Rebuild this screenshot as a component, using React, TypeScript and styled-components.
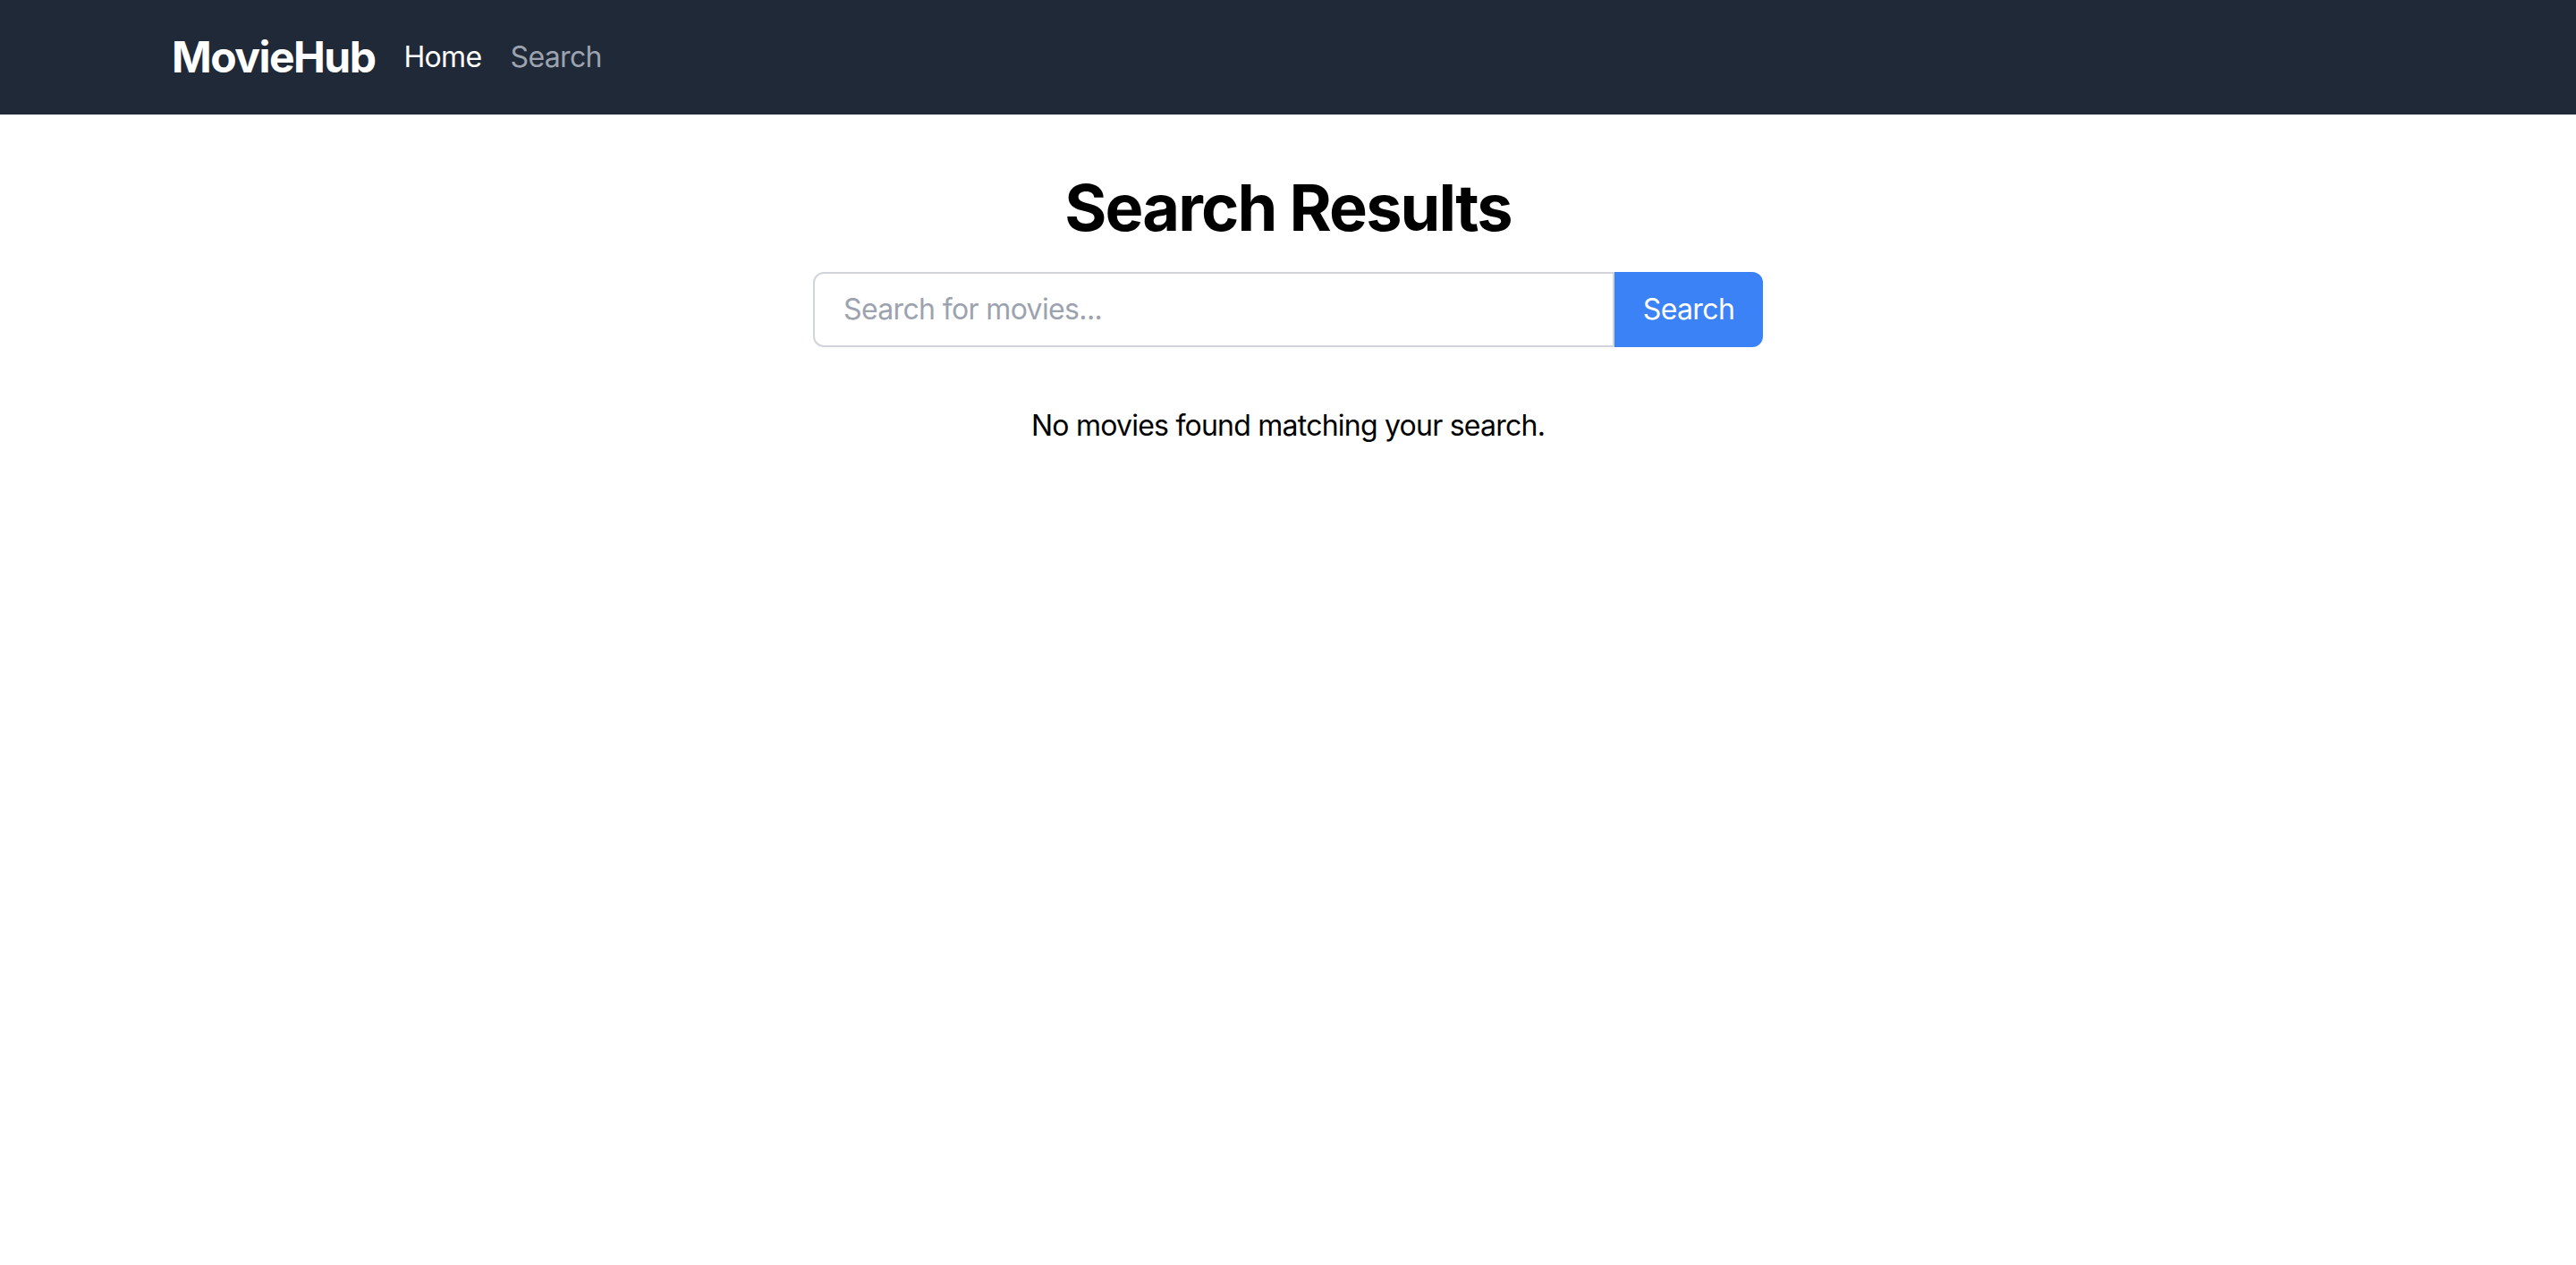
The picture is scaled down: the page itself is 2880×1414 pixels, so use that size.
import React, { useState } from 'react';
import styled, { createGlobalStyle } from 'styled-components';

const GlobalStyle = createGlobalStyle`
  body {
    margin: 0;
    font-family: Inter, "Noto Sans", "Liberation Sans", sans-serif;
    background: #ffffff;
    color: #000000;
  }
  * {
    box-sizing: border-box;
  }
`;

const NavBar = styled.nav`
  background: #1f2937;
  padding: 32px 0;
`;

const Container = styled.div`
  max-width: 2560px;
  margin: 0 auto;
  padding: 0 32px;
`;

const NavInner = styled(Container)`
  display: flex;
  align-items: center;
  gap: 32px;
`;

const Logo = styled.a`
  font-size: 48px;
  line-height: 64px;
  font-weight: 700;
  letter-spacing: -0.032em;
  color: #ffffff;
  text-decoration: none;
`;

const NavLink = styled.a<{ $active?: boolean }>`
  font-size: 32px;
  line-height: 48px;
  letter-spacing: -0.02em;
  color: ${(p) => (p.$active ? '#ffffff' : '#9ca3af')};
  text-decoration: none;
  cursor: pointer;
`;

const Main = styled(Container)`
  padding-top: 64px;
  padding-bottom: 64px;
`;

const Title = styled.h1`
  margin: 0 0 32px;
  font-size: 72px;
  line-height: 80px;
  font-weight: 700;
  letter-spacing: -0.026em;
  text-align: center;
`;

const SearchForm = styled.form`
  display: flex;
  justify-content: center;
`;

const SearchInput = styled.input`
  width: 896px;
  padding: 16px 32px;
  font-family: inherit;
  font-size: 32px;
  line-height: 48px;
  letter-spacing: -0.02em;
  color: #111827;
  border: 2px solid #d1d5db;
  border-radius: 12px 0 0 12px;
  outline: none;

  &::placeholder {
    color: #9ca3af;
  }
`;

const SearchButton = styled.button`
  width: 166px;
  padding: 16px 0;
  font-family: inherit;
  font-size: 32px;
  line-height: 48px;
  letter-spacing: -0.02em;
  color: #ffffff;
  background: #3b82f6;
  border: none;
  border-radius: 0 12px 12px 0;
  cursor: pointer;
`;

const EmptyMessage = styled.p`
  margin: 64px 0 0;
  font-size: 32px;
  line-height: 48px;
  letter-spacing: -0.024em;
  text-align: center;
`;

const App: React.FC = () => {
  const [query, setQuery] = useState('');

  return (
    <>
      <GlobalStyle />
      <NavBar>
        <NavInner>
          <Logo>MovieHub</Logo>
          <NavLink $active>Home</NavLink>
          <NavLink>Search</NavLink>
        </NavInner>
      </NavBar>
      <Main>
        <Title>Search Results</Title>
        <SearchForm onSubmit={(e) => e.preventDefault()}>
          <SearchInput
            type="text"
            placeholder="Search for movies..."
            value={query}
            onChange={(e) => setQuery(e.target.value)}
          />
          <SearchButton type="submit">Search</SearchButton>
        </SearchForm>
        <EmptyMessage>No movies found matching your search.</EmptyMessage>
      </Main>
    </>
  );
};

export default App;
